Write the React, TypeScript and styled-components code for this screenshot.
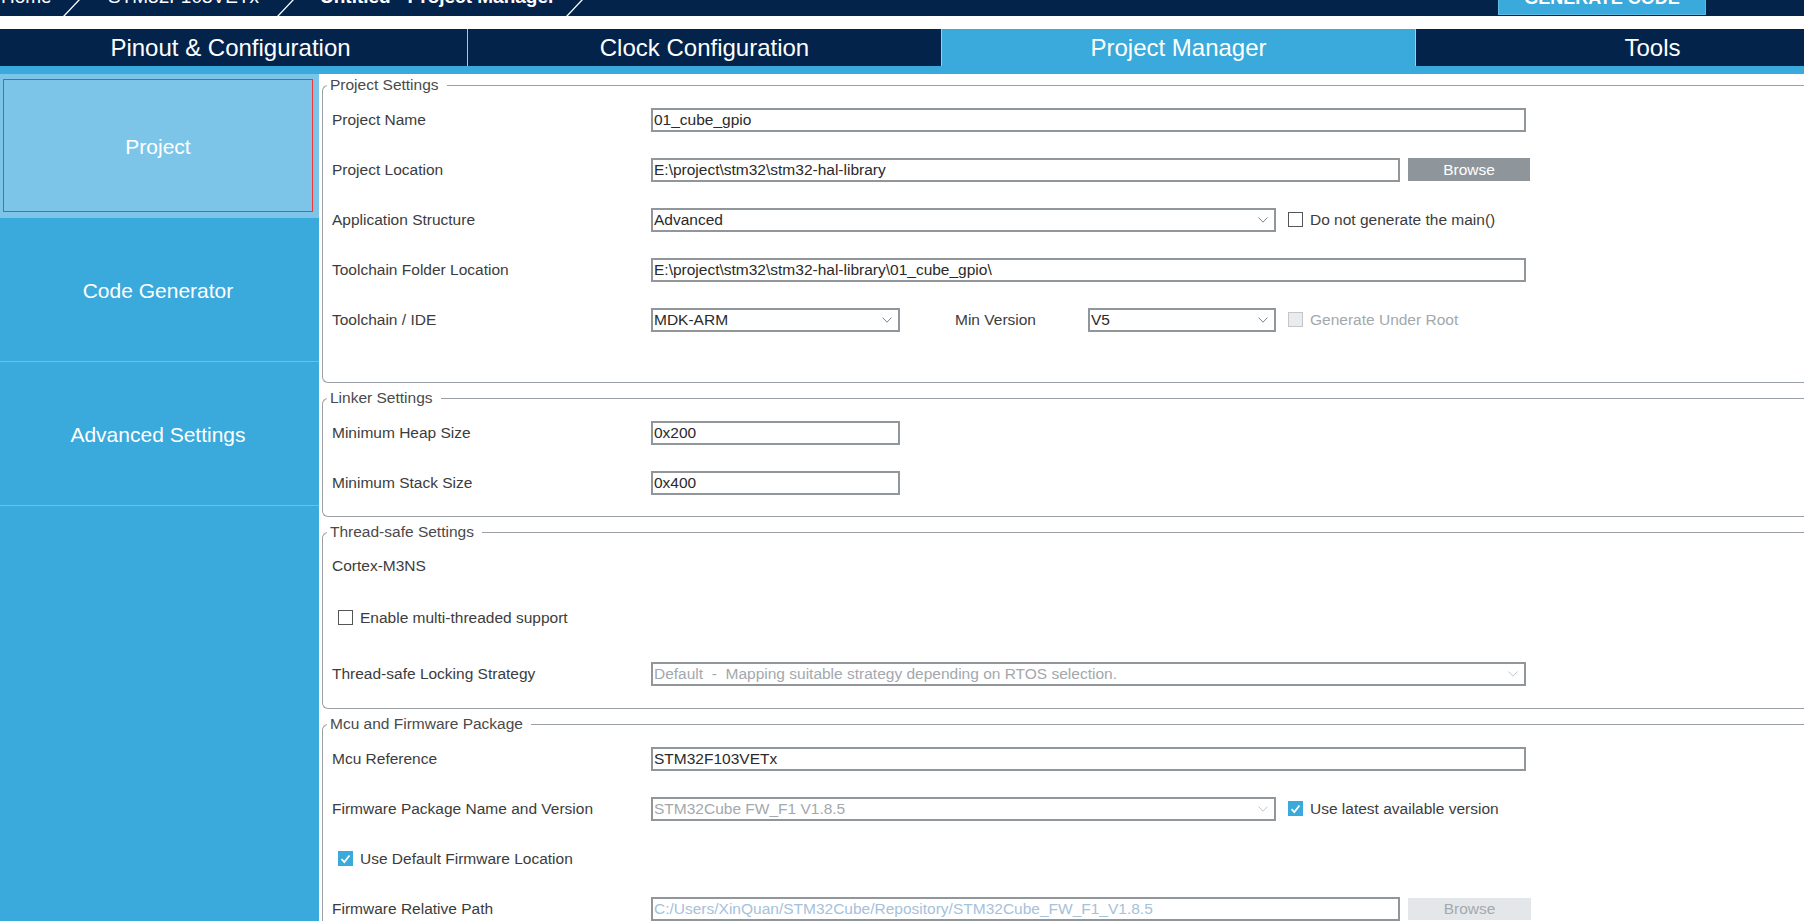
import React from "react";
import styled, { createGlobalStyle } from "styled-components";

const NAVY = "#03234b";
const BLUE = "#3aa9db";
const LIGHT = "#7dc5e8";
const LINE = "#9aa0a5";
const FIELD = "#91969b";
const LABEL = "#3c3c3c";
const MUTED = "#a3a8ad";

const GlobalStyle = createGlobalStyle`
  html, body { margin: 0; padding: 0; background: #fff; overflow: hidden; }
  body { font-family: "Liberation Sans", Arial, sans-serif; }
  *, *::before, *::after { box-sizing: border-box; }
`;

const Page = styled.div`
  width: 1804px;
  height: 921px;
  display: flex;
  flex-direction: column;
  overflow: hidden;
  background: #fff;
`;

/* ---------- top breadcrumb bar ---------- */
const TopBar = styled.div`
  flex: none;
  height: 16px;
  margin-bottom: 13px;
  background: ${NAVY};
  display: flex;
  align-items: flex-end;
  overflow: hidden;
  color: #fff;
`;

const Crumb = styled.div<{ $w: number; $pl: number; $bold?: boolean }>`
  flex: none;
  width: ${(p) => p.$w}px;
  padding-left: ${(p) => p.$pl}px;
  margin-bottom: 8px;
  font-size: 19px;
  line-height: 22px;
  font-weight: ${(p) => (p.$bold ? 700 : 400)};
  white-space: nowrap;
`;

const Slash = styled.svg`
  flex: none;
  display: block;
`;

const GenerateButton = styled.div`
  flex: none;
  align-self: flex-start;
  margin-left: auto;
  margin-right: 98px;
  width: 208px;
  height: 15px;
  background: ${BLUE};
  border: 1px solid #5fbbe4;
  border-top: none;
  display: flex;
  justify-content: center;
  align-items: flex-end;
  overflow: hidden;
`;

const GenerateText = styled.span`
  font-size: 18px;
  line-height: 20px;
  font-weight: 700;
  margin-bottom: 6px;
  color: #fff;
  white-space: nowrap;
`;

/* ---------- main tabs ---------- */
const TabBar = styled.div`
  flex: none;
  height: 37px;
  margin-left: -6px;
  background: ${NAVY};
  display: flex;
`;

const Tab = styled.div<{ $active?: boolean; $first?: boolean }>`
  flex: none;
  width: ${(p) => (p.$first ? 473 : 474)}px;
  height: 100%;
  border-left: ${(p) => (p.$first ? "none" : "1px solid #b9c3ce")};
  background: ${(p) => (p.$active ? BLUE : NAVY)};
  color: #fff;
  font-size: 24px;
  display: flex;
  align-items: center;
  justify-content: center;
  white-space: nowrap;
`;

const Strip = styled.div`
  flex: none;
  height: 8px;
  background: ${BLUE};
`;

/* ---------- body ---------- */
const Main = styled.div`
  flex: 1;
  min-height: 0;
  display: flex;
`;

const Sidebar = styled.nav`
  flex: none;
  width: 319px;
  background: ${BLUE};
  display: flex;
  flex-direction: column;
`;

const NavItem = styled.div<{ $active?: boolean }>`
  flex: none;
  height: 144px;
  padding: 5px 6px 5px 3px;
  background: ${(p) => (p.$active ? LIGHT : BLUE)};
  border-bottom: 1px solid ${(p) => (p.$active ? LIGHT : "#6cbfe6")};
  display: flex;
`;

const NavFrame = styled.div<{ $active?: boolean }>`
  flex: 1;
  border: 1px solid ${(p) => (p.$active ? "#f0363a" : "transparent")};
  display: flex;
  align-items: center;
  justify-content: center;
  padding-top: 2px;
  color: #fff;
  font-size: 21px;
`;

const Content = styled.main`
  flex: 1;
  min-width: 0;
  padding: 2px 0 0 3px;
  overflow: hidden;
  background: #fff;
`;

const Group = styled.fieldset<{ $pb: number }>`
  margin: 0 -30px 6px 0;
  min-width: 0;
  border: 1px solid ${LINE};
  border-right: none;
  border-radius: 6px 0 0 6px;
  padding: 0 0 ${(p) => p.$pb}px 9px;
`;

const Legend = styled.legend`
  margin-left: -5px;
  padding: 0 8px 0 3px;
  font-size: 15.5px;
  line-height: 18px;
  color: #4a4a4a;
`;

const Row = styled.div<{ $h?: number }>`
  height: ${(p) => p.$h ?? 50}px;
  display: grid;
  grid-template-columns: 319px 1fr;
  align-items: center;
  padding-top: 1px;
`;

const Label = styled.span`
  font-size: 15.5px;
  color: ${LABEL};
  white-space: nowrap;
`;

const Controls = styled.div`
  display: flex;
  align-items: center;
`;

const TextInput = styled.input<{ $w: number; $muted?: boolean }>`
  width: ${(p) => p.$w}px;
  height: 24px;
  border: 2px solid ${FIELD};
  padding: 0 1px;
  margin: 0;
  font-family: "Liberation Sans", Arial, sans-serif;
  font-size: 15.5px;
  color: ${(p) => (p.$muted ? "#a6c1da" : "#2a2a2a")};
  background: #fff;
  outline: none;
  border-radius: 0;
`;

const SelectBox = styled.div<{ $w: number; $muted?: boolean }>`
  width: ${(p) => p.$w}px;
  height: 24px;
  border: 2px solid ${FIELD};
  padding-left: 1px;
  display: flex;
  align-items: center;
  justify-content: space-between;
  font-size: 15.5px;
  color: ${(p) => (p.$muted ? MUTED : "#2a2a2a")};
  white-space: pre;
  overflow: hidden;
  background: #fff;
`;

const Chevron = styled.svg`
  flex: none;
  margin-right: 6px;
  display: block;
`;

const BrowseButton = styled.div<{ $disabled?: boolean }>`
  flex: none;
  margin-left: 8px;
  width: ${(p) => (p.$disabled ? 123 : 122)}px;
  height: ${(p) => (p.$disabled ? 22 : 23)}px;
  background: ${(p) => (p.$disabled ? "#e4e7ea" : "#8e959b")};
  color: ${(p) => (p.$disabled ? "#a4a9ae" : "#fff")};
  font-size: 15.5px;
  display: flex;
  align-items: center;
  justify-content: center;
`;

const CheckWrap = styled.label<{ $ml?: number; $muted?: boolean }>`
  display: flex;
  align-items: center;
  gap: 7px;
  margin-left: ${(p) => p.$ml ?? 0}px;
  font-size: 15.5px;
  color: ${(p) => (p.$muted ? MUTED : LABEL)};
  white-space: nowrap;
`;

const Box = styled.span<{ $checked?: boolean; $disabled?: boolean }>`
  flex: none;
  width: 15px;
  height: 15px;
  display: flex;
  align-items: center;
  justify-content: center;
  border: ${(p) =>
    p.$checked ? "none" : p.$disabled ? "1px solid #c3c7cb" : "1.5px solid #555"};
  background: ${(p) => (p.$checked ? BLUE : p.$disabled ? "#e9ebed" : "#fff")};
`;

const MinLabel = styled.span`
  margin-left: 55px;
  width: 133px;
  font-size: 15.5px;
  color: ${LABEL};
`;

const PlainLine = styled.div`
  grid-column: 1 / -1;
  font-size: 15.5px;
  color: ${LABEL};
`;

const CheckRow = styled.div`
  grid-column: 1 / -1;
  padding-left: 6px;
  display: flex;
`;

/* ---------- small pieces ---------- */
const SlashIcon = () => (
  <Slash width="17" height="16" viewBox="0 0 17 16">
    <line x1="0.5" y1="16.5" x2="16.5" y2="-0.5" stroke="#fff" strokeWidth="1.3" />
  </Slash>
);

const Select: React.FC<{ w: number; value: string; muted?: boolean }> = ({ w, value, muted }) => (
  <SelectBox $w={w} $muted={muted}>
    <span>{value}</span>
    <Chevron width="10" height="6" viewBox="0 0 10 6">
      <polyline
        points="0.5,0.5 5,5.2 9.5,0.5"
        fill="none"
        stroke={muted ? "#c2c6ca" : "#7d8388"}
        strokeWidth="1"
      />
    </Chevron>
  </SelectBox>
);

const Check: React.FC<{ label: string; checked?: boolean; disabled?: boolean; ml?: number }> = ({
  label,
  checked,
  disabled,
  ml,
}) => (
  <CheckWrap $ml={ml} $muted={disabled}>
    <Box $checked={checked} $disabled={disabled}>
      {checked && (
        <svg width="11" height="10" viewBox="0 0 11 10">
          <polyline points="1.5,5 4.3,8 9.5,1.5" fill="none" stroke="#fff" strokeWidth="1.8" />
        </svg>
      )}
    </Box>
    {label}
  </CheckWrap>
);

export default function App() {
  return (
    <Page>
      <GlobalStyle />
      <TopBar>
        <Crumb $w={63} $pl={1}>Home</Crumb>
        <SlashIcon />
        <Crumb $w={197} $pl={28}>STM32F103VETx</Crumb>
        <SlashIcon />
        <Crumb $w={272} $pl={26} $bold>
          Untitled - Project Manager
        </Crumb>
        <SlashIcon />
        <GenerateButton>
          <GenerateText>GENERATE CODE</GenerateText>
        </GenerateButton>
      </TopBar>

      <TabBar>
        <Tab $first>Pinout &amp; Configuration</Tab>
        <Tab>Clock Configuration</Tab>
        <Tab $active>Project Manager</Tab>
        <Tab>Tools</Tab>
      </TabBar>
      <Strip />

      <Main>
        <Sidebar>
          <NavItem $active>
            <NavFrame $active>Project</NavFrame>
          </NavItem>
          <NavItem>
            <NavFrame>Code Generator</NavFrame>
          </NavItem>
          <NavItem>
            <NavFrame>Advanced Settings</NavFrame>
          </NavItem>
        </Sidebar>

        <Content>
          <Group $pb={38}>
            <Legend>Project Settings</Legend>
            <Row>
              <Label>Project Name</Label>
              <Controls>
                <TextInput $w={875} value="01_cube_gpio" readOnly />
              </Controls>
            </Row>
            <Row>
              <Label>Project Location</Label>
              <Controls>
                <TextInput $w={749} value="E:\project\stm32\stm32-hal-library" readOnly />
                <BrowseButton>Browse</BrowseButton>
              </Controls>
            </Row>
            <Row>
              <Label>Application Structure</Label>
              <Controls>
                <Select w={625} value="Advanced" />
                <Check ml={12} label="Do not generate the main()" />
              </Controls>
            </Row>
            <Row>
              <Label>Toolchain Folder Location</Label>
              <Controls>
                <TextInput $w={875} value="E:\project\stm32\stm32-hal-library\01_cube_gpio\" readOnly />
              </Controls>
            </Row>
            <Row>
              <Label>Toolchain / IDE</Label>
              <Controls>
                <Select w={249} value="MDK-ARM" />
                <MinLabel>Min Version</MinLabel>
                <Select w={188} value="V5" />
                <Check ml={12} disabled label="Generate Under Root" />
              </Controls>
            </Row>
          </Group>

          <Group $pb={9}>
            <Legend>Linker Settings</Legend>
            <Row>
              <Label>Minimum Heap Size</Label>
              <Controls>
                <TextInput $w={249} value="0x200" readOnly />
              </Controls>
            </Row>
            <Row>
              <Label>Minimum Stack Size</Label>
              <Controls>
                <TextInput $w={249} value="0x400" readOnly />
              </Controls>
            </Row>
          </Group>

          <Group $pb={7}>
            <Legend>Thread-safe Settings</Legend>
            <Row $h={48}>
              <PlainLine>Cortex-M3NS</PlainLine>
            </Row>
            <Row $h={56}>
              <CheckRow>
                <Check label="Enable multi-threaded support" />
              </CheckRow>
            </Row>
            <Row $h={56}>
              <Label>Thread-safe Locking Strategy</Label>
              <Controls>
                <Select
                  w={875}
                  muted
                  value="Default  -  Mapping suitable strategy depending on RTOS selection."
                />
              </Controls>
            </Row>
          </Group>

          <Group $pb={20}>
            <Legend>Mcu and Firmware Package</Legend>
            <Row>
              <Label>Mcu Reference</Label>
              <Controls>
                <TextInput $w={875} value="STM32F103VETx" readOnly />
              </Controls>
            </Row>
            <Row>
              <Label>Firmware Package Name and Version</Label>
              <Controls>
                <Select w={625} muted value="STM32Cube FW_F1 V1.8.5" />
                <Check ml={12} checked label="Use latest available version" />
              </Controls>
            </Row>
            <Row>
              <CheckRow>
                <Check checked label="Use Default Firmware Location" />
              </CheckRow>
            </Row>
            <Row>
              <Label>Firmware Relative Path</Label>
              <Controls>
                <TextInput
                  $w={749}
                  $muted
                  value="C:/Users/XinQuan/STM32Cube/Repository/STM32Cube_FW_F1_V1.8.5"
                  readOnly
                />
                <BrowseButton $disabled>Browse</BrowseButton>
              </Controls>
            </Row>
          </Group>
        </Content>
      </Main>
    </Page>
  );
}
